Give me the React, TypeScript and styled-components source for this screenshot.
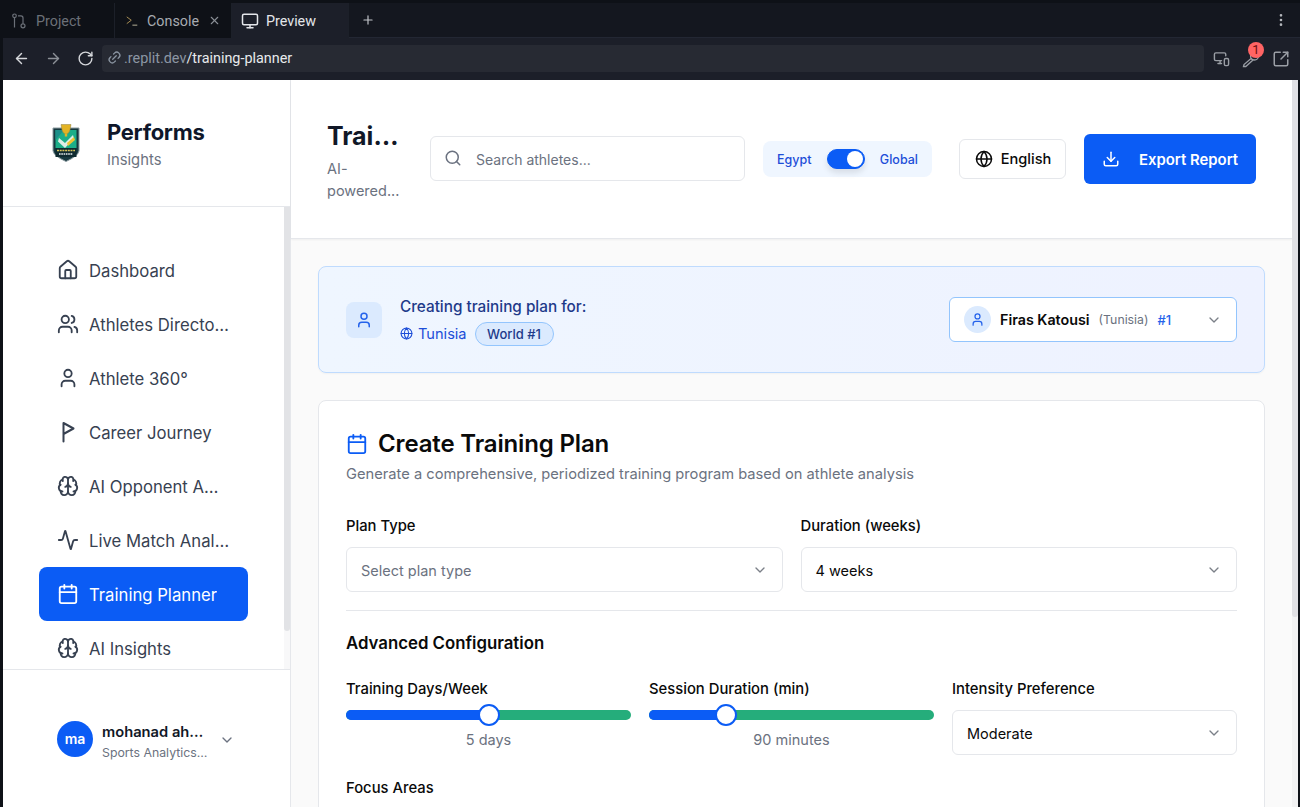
import React from "react";
import styled, { createGlobalStyle } from "styled-components";
import {
  Activity, ArrowLeft, ArrowRight, Brain, Calendar, ChevronDown, Download, Globe, Home, Link2,
  Monitor, MonitorSmartphone, MoreVertical, Plus, RotateCw, Search, SquareArrowOutUpRight, User, Users, X,
} from "lucide-react";

const Global = createGlobalStyle`
  html, body { margin: 0; padding: 0; height: 807px; overflow: hidden; background: #0e1117; }
  * { box-sizing: border-box; }
  #root { height: 807px; font-family: Inter, "Liberation Sans", sans-serif; }
`;

const Page = styled.div`display: flex; flex-direction: column; width: 1300px; height: 807px; background: #0e1117;`;
const TabStrip = styled.div`display: flex; align-items: stretch; height: 38px; padding-top: 3px; background: #0e1117; color: #9da2a6; font-family: Roboto, "Open Sans", sans-serif; font-size: 14.3px;`;
const Tab = styled.div<{ $w: number; $active?: boolean; $dim?: boolean }>`
  display: flex; align-items: center; gap: ${p => (p.$active ? 7 : 9)}px; width: ${p => p.$w}px; padding: 0 10px 0 ${p => (p.$active ? 9 : 11)}px;
  border-right: 1px solid #1c2029; background: ${p => (p.$active ? "#1c1f29" : "transparent")};
  color: ${p => (p.$active ? "#e4e6ea" : p.$dim ? "#6b7078" : "#a7abb1")};
`;
const TabClose = styled.span`display: flex; margin-left: auto; color: #8a8f96;`;
const AddTab = styled.div`display: flex; align-items: center; justify-content: center; width: 38px; color: #c4c7cc; background: #14171f; border-bottom: 1px solid #232733;`;
const StripEnd = styled.div`flex: 1; display: flex; align-items: center; justify-content: flex-end; padding-right: 11px; color: #b4b7bc; background: #14171f; border-bottom: 1px solid #232733;`;
const AddressBar = styled.div`display: flex; align-items: center; height: 42px; padding: 0 10px 1px; background: #1c1f29; color: #c9ccd1; margin-left: 3px;`;
const NavIcon = styled.span<{ $dim?: boolean }>`display: flex; width: 32px; color: ${p => (p.$dim ? "#8c9097" : "#d5d7db")};`;
const UrlBox = styled.div`display: flex; align-items: center; flex: none; width: 1102px; height: 27px; margin-left: -7px; padding-left: 5px; gap: 2px; background: #272a33; border-radius: 4px; font-family: Roboto, "Open Sans", sans-serif; font-size: 14.4px; color: #e8eaed;`;
const UrlDim = styled.span`color: #8c96a3;`;
const BarIcons = styled.div`display: flex; align-items: center; gap: 12px; margin-left: 9px; color: #9a9ea5;`;
const KeyWrap = styled.span`position: relative; display: flex;`;
const KeyBadge = styled.span`position: absolute; top: -8px; left: 6px; width: 16px; height: 16px; border-radius: 50%; background: #ff6464; color: #6b0d0d; font-size: 13px; line-height: 16px; text-align: center; font-family: Roboto, sans-serif;`;

const Body = styled.div`flex: 1; display: flex; min-height: 0; padding: 0 2px 0 3px;`;
const Sidebar = styled.aside`display: flex; flex-direction: column; width: 288px; background: #fff; border-right: 1px solid #e5e7eb;`;
const Brand = styled.div`display: flex; align-items: center; height: 127px; padding: 0 0 0 49px; gap: 27px; border-bottom: 1px solid #e5e7eb;`;
const BrandText = styled.div`display: flex; flex-direction: column; gap: 4px; padding-top: 2px;`;
const BrandName = styled.div`font-size: 22px; line-height: 28px; font-weight: 700; color: #0f172a; letter-spacing: -0.3px;`;
const BrandSub = styled.div`font-size: 14.8px; line-height: 20px; color: #6b7280;`;
const NavScroll = styled.div`position: relative; flex: 1; min-height: 0; overflow: hidden; padding: 36px 0 0 36px; border-bottom: 1px solid #e5e7eb;`;
const ScrollTrack = styled.div`position: absolute; right: 0; top: 0; bottom: 0; width: 6px; background: #f8f8f9;`;
const ScrollThumb = styled.div`height: 424px; background: #e2e3e6; border-radius: 0 0 3px 3px;`;
const NavItem = styled.div<{ $active?: boolean }>`
  display: flex; align-items: center; gap: 10px; width: 209px; height: 54px; padding: 0 18px; border-radius: 8px;
  font-size: 16.7px; color: ${p => (p.$active ? "#fff" : "#374151")}; background: ${p => (p.$active ? "#0b5cf5" : "transparent")};
  svg { flex: none; }
`;
const NavLabel = styled.span<{ $max: number }>`max-width: ${p => p.$max}px; padding-top: 2px; white-space: nowrap; overflow: hidden; text-overflow: ellipsis;`;
const UserFoot = styled.div`display: flex; align-items: center; height: 137px; padding: 2px 0 0 54px; gap: 9px; color: #6b7280;`;
const Avatar = styled.div`flex: none; width: 36px; height: 36px; border-radius: 50%; background: #0b5cf5; color: #fff; display: flex; align-items: center; justify-content: center; font-size: 14px; font-weight: 600; margin-top: -2px;`;
const UserText = styled.div`width: 107px; display: flex; flex-direction: column; gap: 2px; margin-top: 3px;`;
const UserName = styled.div`font-size: 14.7px; line-height: 20px; font-weight: 600; color: #111827; white-space: nowrap; overflow: hidden; text-overflow: ellipsis;`;
const UserRole = styled.div`font-size: 12.3px; line-height: 17px; color: #6b7280; white-space: nowrap; overflow: hidden; text-overflow: ellipsis;`;
const FootChevron = styled.span`display: flex; margin-left: 1px; color: #6b7280;`;
const Main = styled.main`flex: 1; min-width: 0; display: flex; flex-direction: column; background: #fafafa;`;
const PageScrollbar = styled.div`flex: none; width: 6px; background: #f2f2f3;`;
const PageThumb = styled.div`height: 537px; background: #e0e0e4; border-radius: 0 0 3px 3px;`;
const Header = styled.header`display: flex; align-items: center; height: 159px; padding: 0 36px; background: #fff; border-bottom: 1px solid #e5e7eb; box-shadow: 0 1px 2px rgba(0,0,0,.05);`;
const TitleBlock = styled.div`width: 74px; flex: none; margin: 4px 29px 0 0;`;
const PageTitle = styled.h1`margin: 0 0 6px; font-size: 25px; line-height: 32px; font-weight: 700; color: #111827; white-space: nowrap; overflow: hidden; text-overflow: ellipsis;`;
const PageSub = styled.p`margin: 0; font-size: 14.5px; line-height: 22px; color: #6b7280;`;
const Txt = styled.span`padding-top: 2px;`;
const SearchBox = styled.div`display: flex; align-items: center; gap: 14px; width: 315px; height: 45px; margin: -2px 18px 0 0; padding: 0 13px; background: #fff; border: 1px solid #e5e7eb; border-radius: 6px; color: #6b7280; font-size: 14px;`;
const Scope = styled.div`display: flex; align-items: center; width: 169px; height: 36px; padding: 0 14px; justify-content: space-between; background: #eff6ff; border-radius: 8px; font-size: 12.5px; font-weight: 500; color: #1d4ed8; margin-right: 27px;`;
const SwitchTrack = styled.div`position: relative; width: 38px; height: 20px; border-radius: 10px; background: #0b5cf5; border: 1px solid #0b5cf5; box-shadow: 0 4px 6px rgba(0,0,0,.1);`;
const SwitchKnob = styled.div`position: absolute; right: 1px; top: 1px; width: 16px; height: 16px; border-radius: 50%; background: #fff;`;
const LangBtn = styled.div`display: flex; align-items: center; justify-content: center; gap: 8px; width: 107px; height: 40px; padding-left: 1px; border: 1px solid #e5e7eb; border-radius: 6px; background: #fff; color: #0a0a0a; font-size: 14.6px; font-weight: 500; margin-right: 18px;`;
const ExportBtn = styled.div`display: flex; align-items: center; justify-content: center; gap: 19px; width: 172px; height: 50px; border-radius: 6px; background: #0b5cf5; color: #fff; font-size: 14.9px; font-weight: 600;`;
const Content = styled.div`flex: 1; min-height: 0; overflow: hidden; padding: 27px 27px 0;`;
const Banner = styled.section`display: flex; align-items: center; height: 107px; padding: 0 27px; background: linear-gradient(90deg, #eff6ff, #eef2ff); border: 1px solid #bfdbfe; border-radius: 8px; margin-bottom: 27px; box-shadow: 0 1px 2px rgba(0,0,0,.04);`;
const IconTile = styled.div`display: flex; align-items: center; justify-content: center; width: 36px; height: 36px; border-radius: 8px; background: #dbeafe; color: #2563eb; margin-right: 18px;`;
const BannerText = styled.div`display: flex; flex-direction: column; gap: 5px; padding-top: 3px;`;
const BannerTitle = styled.div`font-size: 15.3px; line-height: 20px; font-weight: 500; color: #1e3a8a;`;
const BannerMeta = styled.div`display: flex; align-items: center; gap: 8px; font-size: 14.6px; color: #1d4ed8;`;
const Place = styled.span`display: flex; align-items: center; gap: 5px;`;
const Rank = styled.span`display: flex; align-items: center; height: 24px; padding: 0 11.5px; border-radius: 12px; border: 1px solid #93c5fd; background: #dbeafe; color: #1e3a8a; font-size: 13px; font-weight: 500;`;
const AthleteSelect = styled.div`display: flex; align-items: center; width: 288px; height: 45px; margin-left: auto; padding: 0 14px; background: #fff; border: 1px solid #93c5fd; border-radius: 6px;`;
const MiniAvatar = styled.div`display: flex; align-items: center; justify-content: center; width: 27px; height: 27px; border-radius: 50%; background: #dbeafe; color: #2563eb; margin-right: 9px;`;
const AthName = styled.span`font-size: 14.3px; font-weight: 600; color: #0a0a0a; margin-right: 9px;`;
const AthCountry = styled.span`font-size: 12.3px; color: #6b7280; margin-right: 9px;`;
const AthRank = styled.span`font-size: 13px; font-weight: 500; color: #2563eb;`;
const Chevron = styled.span`display: flex; margin-left: auto; color: #7b8088;`;
const Card = styled.section`height: 600px; padding: 27px 27px 0; background: #fff; border: 1px solid #e5e7eb; border-radius: 8px;`;
const CardTitle = styled.h2`display: flex; align-items: center; gap: 10px; margin: 0 0 4px; font-size: 24px; line-height: 32px; font-weight: 600; color: #0a0a0a; letter-spacing: -0.15px; svg { color: #0b5cf5; }`;
const CardSub = styled.p`margin: 0 0 35px; font-size: 14.7px; line-height: 20px; color: #6b7280;`;
const Grid = styled.div<{ $cols: number }>`display: grid; grid-template-columns: repeat(${p => p.$cols}, 1fr); gap: 18px;`;
const Field = styled.div`display: flex; flex-direction: column; gap: 14px; min-width: 0;`;
const Label = styled.div`font-size: 14.8px; line-height: 14px; font-weight: 500; color: #0a0a0a; white-space: nowrap;`;
const Select = styled.div<{ $muted?: boolean }>`display: flex; align-items: center; justify-content: space-between; height: 45px; padding: 0 14px; background: #fff; border: 1px solid #e5e7eb; border-radius: 6px; font-size: 14.5px; color: ${p => (p.$muted ? "#6b7280" : "#0a0a0a")}; svg { color: #7b8088; }`;
const Divider = styled.hr`height: 1px; margin: 18px 0 22px; border: 0; background: #e5e7eb;`;
const SectionHead = styled.h3`margin: 0 0 29px; font-size: 16.8px; line-height: 20px; font-weight: 600; color: #0a0a0a;`;
const TrackWrap = styled.div`position: relative; height: 10px; border-radius: 5px; background: #25ad7b;`;
const TrackFill = styled.div`height: 100%; border-radius: 5px 0 0 5px; background: #0b5cf5;`;
const Thumb = styled.div`position: absolute; top: -6px; width: 22px; height: 22px; margin-left: -11px; border-radius: 50%; background: #fff; border: 2px solid #0b5cf5;`;
const SliderValue = styled.div`margin-top: -4px; text-align: center; font-size: 14.5px; line-height: 20px; color: #6b7280;`;
const FocusLabel = styled(Label)`margin-top: 26px;`;

const Logo = () => (
  <svg width="28" height="38" viewBox="0 0 28 38" aria-hidden="true">
    <path d="M1 4 L27 4 L27 27 Q26 32 14 37.500 Q2 32 1 27 Z" fill="#17383f" stroke="#8d9ca1" strokeWidth="1" />
    <path d="M3.500 6 L24.500 6 L24.500 24 L3.500 24 Z" fill="#1cae89" />
    <path d="M3.500 6 L12 6 L3.500 16 Z" fill="#1b8f8a" />
    <path d="M9 0.500 L19 0.500 L18 6 Q17 10 14 10 Q11 10 10 6 Z" fill="#e3b324" stroke="#8c8048" strokeWidth=".5" />
    <rect x="12.800" y="9.500" width="2.400" height="3" fill="#e3b324" />
    <path d="M7 14 L13 19 L21 11 L22 14.500 L13 24 L6 17.500 Z" fill="#dfeee6" />
    <path d="M15 19 L22 13 L23 16 L16 22 Z" fill="#efc434" />
    <rect x="3.500" y="24" width="21" height="9" fill="#0f2a30" />
    <path d="M5 26.500 H23" stroke="#d9c45a" strokeWidth="1.600" strokeDasharray="2 .7" />
    <path d="M7 30 H21" stroke="#e8eef0" strokeWidth="1.500" strokeDasharray="1.600 .7" />
  </svg>
);
const PennantFlag = () => (
  <svg width="22" height="22" viewBox="0 0 22 22" fill="none" stroke="currentColor" strokeWidth="2" strokeLinecap="round" strokeLinejoin="round" aria-hidden="true">
    <path d="M6.500 20.500 V2 L16.500 7.500 L6.500 13" />
  </svg>
);
const RepoIcon = () => (
  <svg width="16" height="16" viewBox="0 0 16 16" fill="none" stroke="currentColor" strokeWidth="1.200" aria-hidden="true">
    <circle cx="3.500" cy="2.800" r="1.800" /><circle cx="12" cy="12.800" r="2" />
    <path d="M3.500 4.600 V14.500 M7 2.800 H10 Q12 2.800 12 5 V10.800" />
  </svg>
);
const PromptIcon = () => (
  <svg width="16" height="16" viewBox="0 0 16 16" fill="none" stroke="#a98f55" strokeWidth="1.300" aria-hidden="true">
    <path d="M1 2.500 L7 7 L1 11.500" /><path d="M8.500 13.500 H15" stroke="#b7b29a" />
  </svg>
);
const KeyIcon = () => (
  <svg width="18" height="18" viewBox="0 0 18 18" fill="none" stroke="currentColor" strokeWidth="1.300" strokeLinecap="round" aria-hidden="true">
    <path d="M1.500 16.500 L2 14.500 L9 8.500 L11 10 L3.800 16.500 Z" /><circle cx="12.500" cy="6" r="4" />
  </svg>
);

const navItems: [string, React.ReactNode, number][] = [
  ["Dashboard", <Home size={22} />, 141],
  ["Athletes Directory", <Users size={22} />, 141],
  ["Athlete 360°", <User size={22} />, 141],
  ["Career Journey", <PennantFlag />, 141],
  ["AI Opponent Analysis", <Brain size={22} />, 133],
  ["Live Match Analysis", <Activity size={22} />, 141],
  ["Training Planner", <Calendar size={22} />, 141],
  ["AI Insights", <Brain size={22} />, 141],
];

const Slider = ({ label, pct, value }: { label: string; pct: number; value: string }) => (
  <Field>
    <Label>{label}</Label>
    <TrackWrap>
      <TrackFill style={{ width: `${pct}%` }} />
      <Thumb style={{ left: `${pct}%` }} />
    </TrackWrap>
    <SliderValue>{value}</SliderValue>
  </Field>
);

export default function App() {
  return (
    <Page>
      <Global />
      <TabStrip>
        <Tab $w={115} $dim><RepoIcon />Project</Tab>
        <Tab $w={117}><PromptIcon />Console<TabClose><X size={13} /></TabClose></Tab>
        <Tab $w={117} $active><Monitor size={18} />Preview</Tab>
        <AddTab><Plus size={14} /></AddTab>
        <StripEnd><MoreVertical size={16} /></StripEnd>
      </TabStrip>
      <AddressBar>
        <NavIcon><ArrowLeft size={17} /></NavIcon>
        <NavIcon $dim><ArrowRight size={17} /></NavIcon>
        <NavIcon><RotateCw size={17} /></NavIcon>
        <UrlBox>
          <UrlDim as="span"><Link2 size={15} style={{ transform: "rotate(-45deg)", verticalAlign: "-2px" }} /></UrlDim>
          <span><UrlDim>.replit.dev</UrlDim>/training-planner</span>
        </UrlBox>
        <BarIcons>
          <MonitorSmartphone size={17} />
          <KeyWrap><KeyIcon /><KeyBadge>1</KeyBadge></KeyWrap>
          <SquareArrowOutUpRight size={18} />
        </BarIcons>
      </AddressBar>
      <Body>
        <Sidebar>
          <Brand>
            <Logo />
            <BrandText>
              <BrandName>Performs</BrandName>
              <BrandSub>Insights</BrandSub>
            </BrandText>
          </Brand>
          <NavScroll>
            {navItems.map(([label, icon, max]) => (
              <NavItem key={label} $active={label === "Training Planner"}>
                {icon}
                <NavLabel $max={max}>{label}</NavLabel>
              </NavItem>
            ))}
            <ScrollTrack><ScrollThumb /></ScrollTrack>
          </NavScroll>
          <UserFoot>
            <Avatar>ma</Avatar>
            <UserText>
              <UserName>mohanad ahmed</UserName>
              <UserRole>Sports Analytics Lead</UserRole>
            </UserText>
            <FootChevron><ChevronDown size={16} /></FootChevron>
          </UserFoot>
        </Sidebar>
        <Main>
          <Header>
            <TitleBlock>
              <PageTitle>Training Planner</PageTitle>
              <PageSub>AI-powered...</PageSub>
            </TitleBlock>
            <SearchBox><Search size={18} /><Txt>Search athletes...</Txt></SearchBox>
            <Scope>Egypt<SwitchTrack><SwitchKnob /></SwitchTrack>Global</Scope>
            <LangBtn><Globe size={18} />English</LangBtn>
            <ExportBtn><Download size={18} /><Txt>Export Report</Txt></ExportBtn>
          </Header>
          <Content>
            <Banner>
              <IconTile><User size={18} /></IconTile>
              <BannerText>
                <BannerTitle>Creating training plan for:</BannerTitle>
                <BannerMeta>
                  <Place><Globe size={13} />Tunisia</Place>
                  <Rank>World #1</Rank>
                </BannerMeta>
              </BannerText>
              <AthleteSelect>
                <MiniAvatar><User size={15} /></MiniAvatar>
                <AthName>Firas Katousi</AthName>
                <AthCountry>(Tunisia)</AthCountry>
                <AthRank>#1</AthRank>
                <Chevron><ChevronDown size={16} /></Chevron>
              </AthleteSelect>
            </Banner>
            <Card>
              <CardTitle><Calendar size={22} />Create Training Plan</CardTitle>
              <CardSub>Generate a comprehensive, periodized training program based on athlete analysis</CardSub>
              <Grid $cols={2}>
                <Field>
                  <Label>Plan Type</Label>
                  <Select $muted><Txt>Select plan type</Txt><ChevronDown size={16} /></Select>
                </Field>
                <Field>
                  <Label>Duration (weeks)</Label>
                  <Select><Txt>4 weeks</Txt><ChevronDown size={16} /></Select>
                </Field>
              </Grid>
              <Divider />
              <SectionHead>Advanced Configuration</SectionHead>
              <Grid $cols={3}>
                <Slider label="Training Days/Week" pct={50} value="5 days" />
                <Slider label="Session Duration (min)" pct={27} value="90 minutes" />
                <Field>
                  <Label>Intensity Preference</Label>
                  <Select><Txt>Moderate</Txt><ChevronDown size={16} /></Select>
                </Field>
              </Grid>
              <FocusLabel>Focus Areas</FocusLabel>
            </Card>
          </Content>
        </Main>
        <PageScrollbar><PageThumb /></PageScrollbar>
      </Body>
    </Page>
  );
}
